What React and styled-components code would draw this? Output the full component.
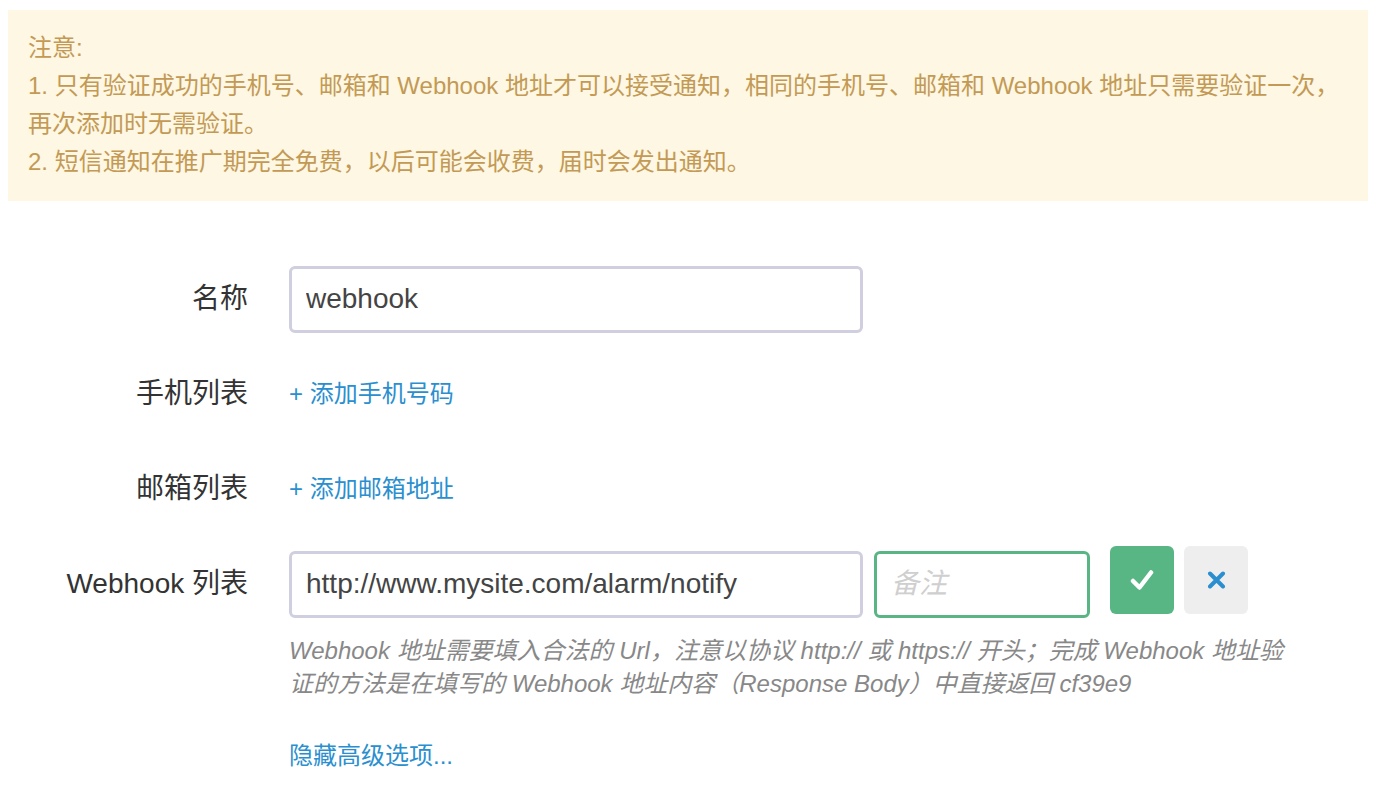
import React from "react";
import styled, { createGlobalStyle } from "styled-components";

const GlobalStyle = createGlobalStyle`
  body {
    margin: 0;
    background: #fff;
    font-family: "Liberation Sans", "Noto Sans CJK SC", sans-serif;
  }
`;

const Page = styled.div`
  padding: 10px 8px;
`;

const Notice = styled.div`
  background-color: #fdf7e3;
  color: #c39a55;
  font-size: 24px;
  line-height: 38px;
  padding: 19px 20px 20px;
`;

const Form = styled.div`
  margin-top: 64px;
`;

const Row = styled.div`
  display: grid;
  grid-template-columns: 240px 1fr;
  column-gap: 41px;
  align-items: center;
  min-height: 68px;
  margin-bottom: 27px;
`;

const Label = styled.div`
  text-align: right;
  font-size: 28px;
  color: #333;
  line-height: 68px;
`;

const Field = styled.div`
  display: flex;
  align-items: center;
`;

const Input = styled.input`
  box-sizing: border-box;
  width: ${(props) => props.$width || 574}px;
  height: 67px;
  margin-left: ${(props) => props.$gap || 0}px;
  padding: 0 14px;
  border: 3px solid ${(props) => (props.$focus ? "#5ab585" : "#d0cfe0")};
  border-radius: 6px;
  font-family: "Liberation Sans", "Noto Sans CJK SC", sans-serif;
  font-size: 28px;
  color: #444;
  outline: none;
  background: #fff;

  &::placeholder {
    color: #cfcfcf;
    font-style: italic;
  }
`;

const IconButton = styled.button`
  width: 64px;
  height: 68px;
  margin-left: ${(props) => props.$gap}px;
  margin-top: -8px;
  border: none;
  border-radius: 6px;
  background-color: ${(props) => (props.$primary ? "#58b584" : "#eeeeee")};
  display: flex;
  align-items: center;
  justify-content: center;
  padding: 0;
  cursor: pointer;
`;

const AddLink = styled.a`
  display: block;
  margin-top: -5px;
  color: #2b8fcf;
  font-size: 24px;
  text-decoration: none;
  cursor: pointer;
`;

const Help = styled.div`
  margin-left: 281px;
  margin-top: -11px;
  width: 1000px;
  color: #888;
  font-style: italic;
  font-size: 24px;
  line-height: 33px;
`;

const Toggle = styled.a`
  display: block;
  margin-left: 281px;
  margin-top: 39px;
  color: #2b8fcf;
  font-size: 24px;
  line-height: 33px;
  text-decoration: none;
`;

const CheckIcon = () => (
  <svg width="24" height="22" viewBox="0 0 24 22">
    <path
      d="M3 12 L9.5 18.5 L21 3.5"
      fill="none"
      stroke="#fff"
      strokeWidth="4.5"
      strokeLinecap="round"
      strokeLinejoin="round"
    />
  </svg>
);

const CloseIcon = () => (
  <svg width="19" height="18" viewBox="0 0 19 18">
    <path
      d="M3 2.5 L16 15.5 M16 2.5 L3 15.5"
      fill="none"
      stroke="#2b8fcf"
      strokeWidth="4"
      strokeLinecap="round"
    />
  </svg>
);

const App = () => {
  return (
    <Page>
      <GlobalStyle />
      <Notice>
        注意:
        <br />
        1. 只有验证成功的手机号、邮箱和 Webhook 地址才可以接受通知，相同的手机号、邮箱和 Webhook 地址只需要验证一次，
        <br />
        再次添加时无需验证。
        <br />
        2. 短信通知在推广期完全免费，以后可能会收费，届时会发出通知。
      </Notice>

      <Form>
        <Row>
          <Label>名称</Label>
          <Field>
            <Input defaultValue="webhook" />
          </Field>
        </Row>
        <Row>
          <Label>手机列表</Label>
          <div>
            <AddLink>+ 添加手机号码</AddLink>
          </div>
        </Row>
        <Row>
          <Label>邮箱列表</Label>
          <div>
            <AddLink>+ 添加邮箱地址</AddLink>
          </div>
        </Row>
        <Row>
          <Label>Webhook 列表</Label>
          <Field>
            <Input defaultValue="http://www.mysite.com/alarm/notify" />
            <Input $focus $width={216} $gap={11} placeholder="备注" />
            <IconButton $primary $gap={20}>
              <CheckIcon />
            </IconButton>
            <IconButton $gap={10}>
              <CloseIcon />
            </IconButton>
          </Field>
        </Row>
        <Help>
          Webhook 地址需要填入合法的 Url，注意以协议 http:// 或 https:// 开头；完成 Webhook 地址验证的方法是在填写的 Webhook 地址内容（Response Body）中直接返回 cf39e9
        </Help>
        <Toggle>隐藏高级选项...</Toggle>
      </Form>
    </Page>
  );
};

export default App;
